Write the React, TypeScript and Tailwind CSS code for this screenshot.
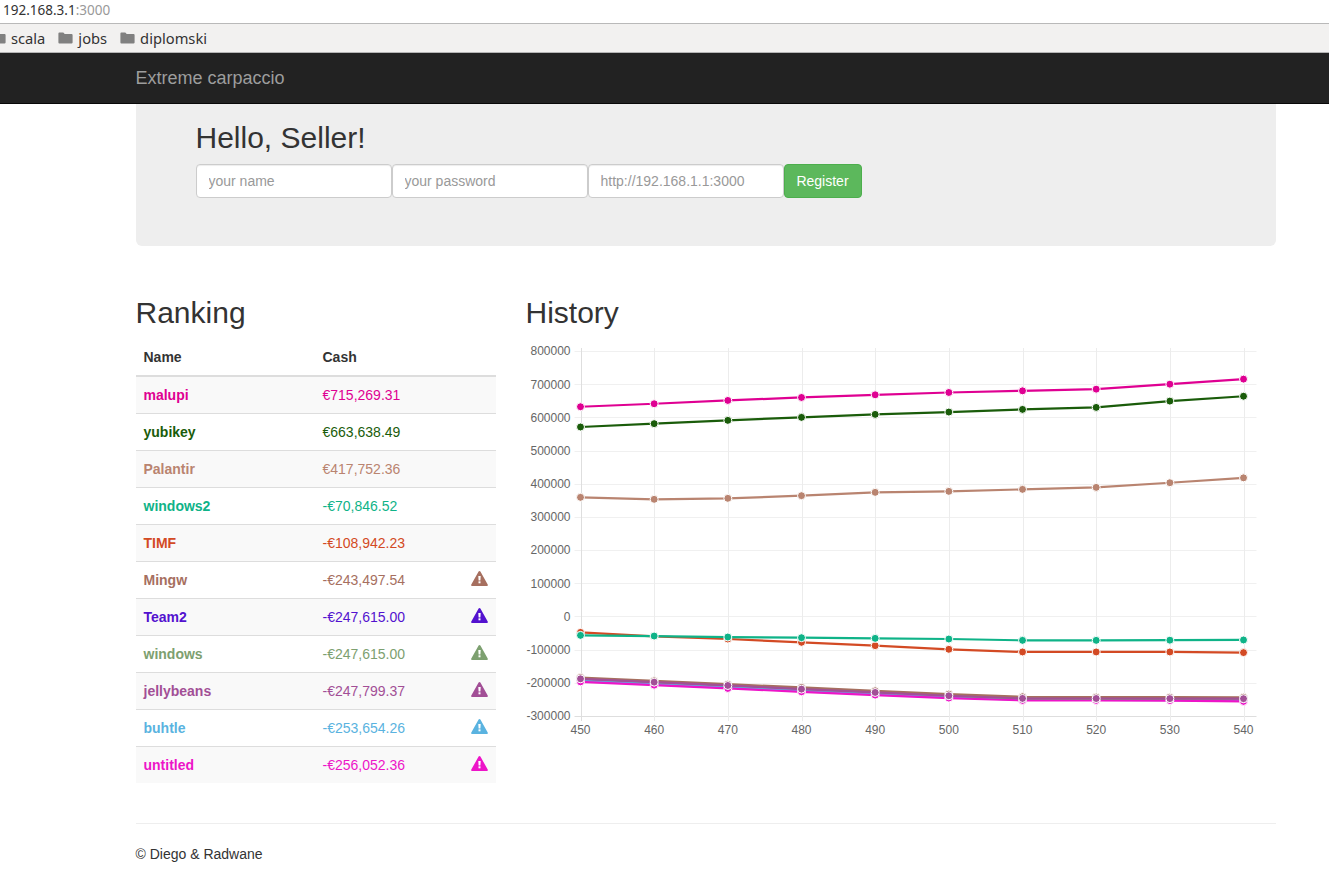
import React from 'react';

type Seller = { name: string; cash: string; color: string; warn?: boolean };

const sellers: Seller[] = [
  { name: 'malupi', cash: '€715,269.31', color: '#df0092' },
  { name: 'yubikey', cash: '€663,638.49', color: '#1a5c0a' },
  { name: 'Palantir', cash: '€417,752.36', color: '#b98470' },
  { name: 'windows2', cash: '-€70,846.52', color: '#0fb388' },
  { name: 'TIMF', cash: '-€108,942.23', color: '#d34a24' },
  { name: 'Mingw', cash: '-€243,497.54', color: '#a66f5f', warn: true },
  { name: 'Team2', cash: '-€247,615.00', color: '#5312cf', warn: true },
  { name: 'windows', cash: '-€247,615.00', color: '#7da070', warn: true },
  { name: 'jellybeans', cash: '-€247,799.37', color: '#a24f96', warn: true },
  { name: 'buhtle', cash: '-€253,654.26', color: '#5ab3e0', warn: true },
  { name: 'untitled', cash: '-€256,052.36', color: '#ed15c8', warn: true },
];

// drawn bottom to top, so the order differs from the ranking
const series = [
  { color: '#5312cf', data: [-190, -200, -210, -220, -230, -240, -247, -247.5, -247.6, -247.6] },
  { color: '#5ab3e0', data: [-193, -203, -213, -223, -233, -243, -251, -251.5, -252, -253.65] },
  { color: '#ed15c8', data: [-197, -207, -217, -227, -237, -246, -253, -253, -253.5, -256.05] },
  { color: '#7da070', data: [-187, -197, -207, -217, -227, -238, -247, -247.5, -247.6, -247.6] },
  { color: '#a66f5f', data: [-184, -194, -204, -214, -224, -234, -242, -243, -243.3, -243.5] },
  { color: '#a24f96', data: [-188, -198, -208, -219, -229, -239, -247, -247.3, -247.6, -247.8] },
  { color: '#d34a24', data: [-48, -60, -68, -78, -88, -99, -107, -107, -107, -108.94] },
  { color: '#0fb388', data: [-57, -59, -62, -64, -66, -68, -72, -72, -71.5, -70.85] },
  { color: '#b98470', data: [359, 353, 356, 364, 374, 377, 383, 389, 403, 417.75] },
  { color: '#1a5c0a', data: [571, 581, 591, 600, 609, 616, 624, 630, 649, 663.64] },
  { color: '#df0092', data: [632, 641, 651, 660, 668, 675, 680, 685, 700, 715.27] },
];

const xTicks = [450, 460, 470, 480, 490, 500, 510, 520, 530, 540];
const yTicks = [800, 700, 600, 500, 400, 300, 200, 100, 0, -100, -200, -300];
const chartLeft = 54.5;
const chartRight = 730.5;
const chartTop = 12;
const chartBottom = 377;
const stepX = 73.67;
const xAt = (i: number) => chartLeft + i * stepX;
const yAt = (v: number) => chartTop + ((800 - v) / 1100) * (chartBottom - chartTop);

function Folder() {
  return (
    <svg width="15" height="12" viewBox="0 0 15 12" className="shrink-0">
      <path d="M1.3 0.5h4l1.4 1.6h7c.5 0 .9.4.9.9v7.6c0 .5-.4.9-.9.9H1.3c-.5 0-.9-.4-.9-.9V1.4c0-.5.4-.9.9-.9z" fill="#808080" />
    </svg>
  );
}

function WarningIcon({ color }: { color: string }) {
  return (
    <svg width="17" height="15" viewBox="0 0 17 15" className="mb-[3px] ml-auto block">
      <path d="M7.6 0.6c.4-.7 1.4-.7 1.8 0l7.3 12.8c.4.7-.1 1.5-.9 1.5H1.2c-.8 0-1.3-.8-.9-1.5z" fill={color} />
      <path d="M7.3 5h2.4l-.3 4.4H7.6z" fill="#fff" />
      <rect x="7.5" y="10.3" width="2" height="2" fill="#fff" />
    </svg>
  );
}

function HistoryChart() {
  return (
    <svg width="750" height="400" viewBox="0 0 750 400" className="block">
      {yTicks.map((t) => (
        <g key={t}>
          <line x1={chartLeft - 6} x2={chartRight} y1={Math.round(yAt(t)) + 0.5} y2={Math.round(yAt(t)) + 0.5} stroke={t === -300 ? '#dedede' : '#f0f0f0'} />
          <text x={chartLeft - 10} y={yAt(t) + 4.4} textAnchor="end" fontSize="12" fill="#666">{t === 0 ? '0' : `${t}000`}</text>
        </g>
      ))}
      {xTicks.map((t, i) => (
        <g key={t}>
          <line x1={Math.round(xAt(i)) + 0.5} x2={Math.round(xAt(i)) + 0.5} y1={chartTop - 3} y2={chartBottom + 5} stroke={i === 0 ? '#dedede' : '#ececec'} />
          <text x={xAt(i)} y={chartBottom + 18} textAnchor="middle" fontSize="12" fill="#666">{t}</text>
        </g>
      ))}
      {series.map((s) => (
        <g key={s.color}>
          <polyline
            fill="none"
            stroke={s.color}
            strokeWidth="2.2"
            points={s.data.map((v, i) => `${xAt(i)},${yAt(v)}`).join(' ')}
          />
          {s.data.map((v, i) => (
            <circle key={i} cx={xAt(i)} cy={yAt(v)} r="4" fill={s.color} stroke="#fff" strokeWidth="1" />
          ))}
        </g>
      ))}
    </svg>
  );
}

export default function App() {
  return (
    <div className="min-h-[873px] overflow-hidden bg-white font-['Liberation_Sans',sans-serif] text-sm leading-5 text-[#333]">
      {/* Browser chrome */}
      <div className="h-6 border-b border-[#b9b9b9] bg-white pl-[3px] font-['Noto_Sans',sans-serif] text-[13.5px] leading-[20px] text-[#333]">
        192.168.3.1<span className="text-[#999]">:3000</span>
      </div>
      <div className="flex h-[29px] items-center gap-[13px] border-b border-[#b5b5b5] bg-[#f2f1f0] font-['Noto_Sans',sans-serif] text-[14.7px] text-[#333]">
        <div className="-ml-[9px] flex items-center gap-[5px]"><Folder /><span>scala</span></div>
        <div className="flex items-center gap-[5px]"><Folder /><span>jobs</span></div>
        <div className="flex items-center gap-[5px]"><Folder /><span>diplomski</span></div>
      </div>

      {/* Navbar */}
      <nav className="flex h-[51px] items-center border-b border-[#080808] bg-[#222] pl-[135.5px] text-lg text-[#9d9d9d]">
        Extreme carpaccio
      </nav>

      <div className="ml-[135.5px] w-[1140px]">
        {/* Jumbotron */}
        <section className="mb-[50px] rounded-b-md bg-[#eee] px-[60px] pb-[48px] pt-[17px]">
          <h1 className="mb-[10px] text-[30px] leading-[33px]">Hello, Seller!</h1>
          <form className="flex">
            <input placeholder="your name" className="h-[34px] w-[196px] rounded border border-[#ccc] bg-white px-3 text-sm text-[#555] shadow-[inset_0_1px_1px_rgba(0,0,0,0.075)] placeholder:text-[#999]" />
            <input placeholder="your password" className="h-[34px] w-[196px] rounded border border-[#ccc] bg-white px-3 text-sm text-[#555] shadow-[inset_0_1px_1px_rgba(0,0,0,0.075)] placeholder:text-[#999]" />
            <input placeholder="http://192.168.1.1:3000" className="h-[34px] w-[196px] rounded border border-[#ccc] bg-white px-3 text-sm text-[#555] shadow-[inset_0_1px_1px_rgba(0,0,0,0.075)] placeholder:text-[#999]" />
            <button type="button" className="h-[34px] w-[78px] rounded border border-[#4cae4c] bg-[#5cb85c] text-sm text-white">Register</button>
          </form>
        </section>

        <div className="flex gap-[30px]">
          {/* Ranking */}
          <section className="w-[360px] shrink-0">
            <h2 className="mb-[10px] text-[30px] leading-[33px]">Ranking</h2>
            <table className="w-full border-collapse">
              <thead>
                <tr className="border-b-2 border-[#ddd] text-left">
                  <th className="w-[179px] p-2 font-bold">Name</th>
                  <th className="p-2 font-bold">Cash</th>
                  <th className="p-2"></th>
                </tr>
              </thead>
              <tbody>
                {sellers.map((s, i) => (
                  <tr key={s.name} className={`border-t border-[#ddd] first:border-t-0 ${i % 2 === 0 ? 'bg-[#f9f9f9]' : ''}`} style={{ color: s.color }}>
                    <td className="p-2 font-bold">{s.name}</td>
                    <td className="p-2">{s.cash}</td>
                    <td className="w-[33px] p-2 text-right">
                      {s.warn && <WarningIcon color={s.color} />}
                    </td>
                  </tr>
                ))}
              </tbody>
            </table>
          </section>

          {/* History */}
          <section className="w-[750px]">
            <h2 className="mb-[10px] text-[30px] leading-[33px]">History</h2>
            <HistoryChart />
          </section>
        </div>

        <footer className="mt-[40px] border-t border-[#eee] pt-[20px] text-[#333]">© Diego &amp; Radwane</footer>
      </div>
    </div>
  );
}
